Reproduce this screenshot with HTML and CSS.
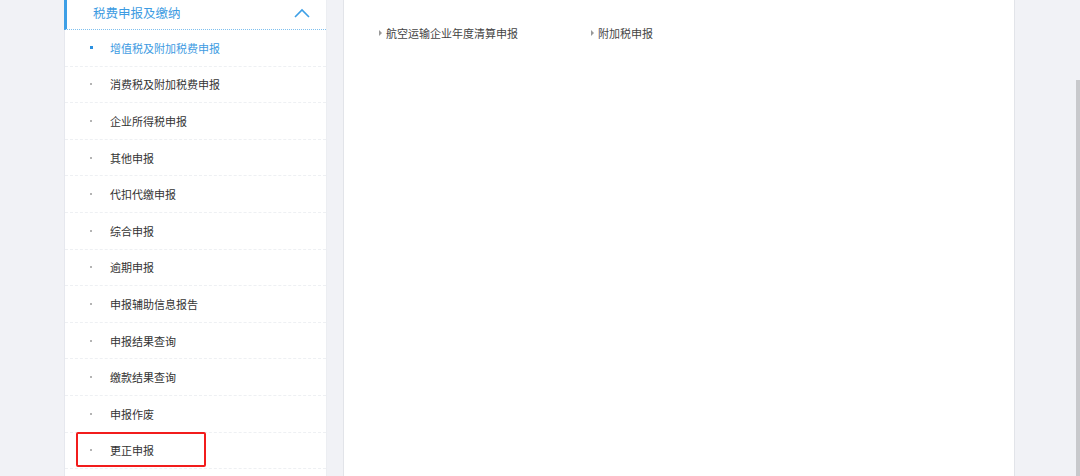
FILE: index.html
```html
<!DOCTYPE html>
<html lang="zh-CN">
<head>
  <meta charset="UTF-8">
  <title>税费申报及缴纳</title>
  <link rel="stylesheet" href="styles.css">
</head>
<body>

  <div class="page">
    <!-- left menu -->
    <aside class="sidebar">
      <div class="menu-head">
        <span>税费申报及缴纳</span>
        <svg class="chevron" width="16" height="10" viewBox="0 0 16 10">
          <polyline points="1,9 8,2 15,9" fill="none" stroke="#3d9fe6" stroke-width="1.6"/>
        </svg>
      </div>
      <ul class="menu">
        <li class="active"><i></i>增值税及附加税费申报</li>
        <li><i></i>消费税及附加税费申报</li>
        <li><i></i>企业所得税申报</li>
        <li><i></i>其他申报</li>
        <li><i></i>代扣代缴申报</li>
        <li><i></i>综合申报</li>
        <li><i></i>逾期申报</li>
        <li><i></i>申报辅助信息报告</li>
        <li><i></i>申报结果查询</li>
        <li><i></i>缴款结果查询</li>
        <li><i></i>申报作废</li>
        <li class="marked"><i></i>更正申报<span class="red-box"></span></li>
      </ul>
    </aside>

    <!-- content -->
    <main class="content">
      <div class="links cut">
        <a>居民企业申报</a>
        <a>财产和行为税合并</a>
      </div>
      <div class="links">
        <a><b></b>航空运输企业年度清算申报</a>
        <a><b></b>附加税申报</a>
      </div>
    </main>

    <div class="scrollbar"><div class="thumb"></div></div>
  </div>

</body>
</html>
```

FILE: styles.css
```css
body {
  margin: 0;
  padding: 0;
  background: #f1f2f6;
  font-family: "Noto Sans CJK SC", "Noto Sans", sans-serif;
  overflow: hidden;
}
.page {
  display: flex;
  height: 476px;
}
.sidebar {
  width: 261px;
  margin-left: 64px;
  background: #fff;
  border-left: 1px solid #e6e8ee;
  border-right: 1px solid #eceef2;
}
.menu-head {
  display: flex;
  align-items: center;
  justify-content: space-between;
  padding: 0 16px 0 26px;
  margin-left: -1px;
  border-left: 3px solid #3d9fe6;
  border-bottom: 1px dotted #7fc0ef;
  color: #3d9be2;
  font-size: 12.5px;
  box-sizing: border-box;
  height: 30px;
}
.menu-head span { margin-top: -5px; }
.chevron { margin-top: -4px; }
.menu {
  list-style: none;
  margin: 0;
  padding: 0;
}
.menu li {
  position: relative;
  height: 35.6px;
  display: flex;
  align-items: center;
  padding-left: 46px;
  border-bottom: 1px dashed #eef0f3;
  font-size: 11px;
  color: #333;
}
.menu li i {
  width: 2px;
  height: 2px;
  background: #b4b4b4;
  margin-right: 18px;
  margin-left: -21px;
}
.menu li.active { color: #3d9be2; }
.menu li.active i {
  width: 3px;
  height: 3px;
  background: #2b90e0;
  margin-right: 17px;
}
.red-box {
  position: absolute;
  left: 11px;
  top: -1px;
  width: 126px;
  height: 31px;
  border: 2px solid #f21c1c;
  border-radius: 2px;
}
.content {
  width: 672px;
  margin-left: 16px;
  background: #fff;
  border-left: 1px solid #e2e4e9;
  border-right: 1px solid #e2e4e9;
  box-sizing: border-box;
  padding-left: 35px;
}
.links {
  display: flex;
  font-size: 11px;
  color: #444;
  height: 18px;
  align-items: center;
}
.links.cut {
  margin-top: -16px;
  color: #666;
}
.links.cut a:first-child { margin-left: 32px; width: 240px; }
.links a {
  display: flex;
  align-items: center;
  width: 212px;
}
.links b {
  width: 0;
  height: 0;
  border-top: 3px solid transparent;
  border-bottom: 3px solid transparent;
  border-left: 3px solid #999;
  margin-right: 4px;
}
.links:not(.cut) { margin-top: 22px; }
.scrollbar {
  margin-left: auto;
  width: 4px;
  display: flex;
  flex-direction: column;
}
.thumb {
  margin-top: 80px;
  flex: 1;
  background: #c8c9cc;
}
```
